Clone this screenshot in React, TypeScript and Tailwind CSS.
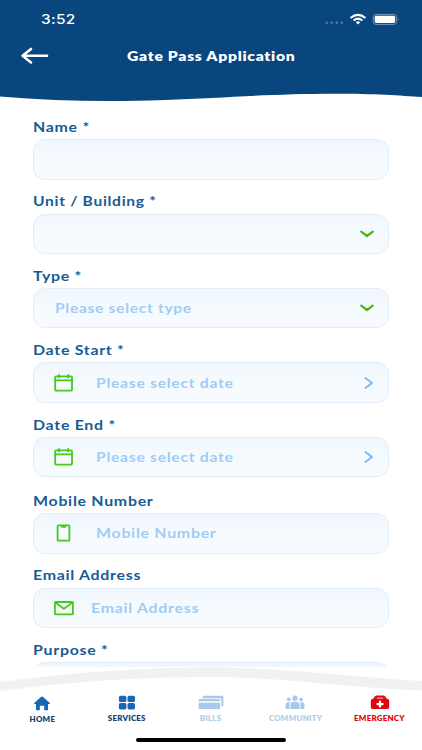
import React from "react";
import clsx from "clsx";

type FieldProps = {
  label: string;
  placeholder?: string;
  icon?: React.ReactNode;
  trailing?: "down" | "right";
  className?: string;
  labelClass?: string;
  textClass?: string;
};

// --- ICONS ---
const CalendarIcon = () => (
  <svg width="20" height="18" viewBox="0 0 20 18" fill="none" stroke="#46c81e" strokeWidth="1.8" strokeLinejoin="round" strokeLinecap="round">
    <rect x="1.2" y="2.4" width="16.8" height="14.2" rx="0.8" />
    <path d="M1.2 6.3H18M5 0.9V3.4M14.2 0.9V3.4" />
  </svg>
);

const PhoneIcon = () => (
  <svg width="20" height="18" viewBox="0 0 20 18" fill="none" stroke="#46c81e" strokeWidth="1.8" strokeLinejoin="round">
    <rect x="3.6" y="1.3" width="11.8" height="15.4" rx="0.6" />
    <path d="M6.6 1.4H12.4L11.4 3.4H7.6Z" fill="#46c81e" strokeWidth="0.6" />
  </svg>
);

const MailIcon = () => (
  <svg width="20" height="18" viewBox="0 0 20 18" fill="none" stroke="#46c81e" strokeWidth="1.8" strokeLinejoin="round">
    <rect x="0.9" y="3" width="18" height="12.4" rx="0.6" />
    <path d="M1.4 3.6L9.9 9.8L18.4 3.6" />
  </svg>
);

const HomeIcon = () => (
  <svg width="18" height="15" viewBox="0 0 18 15" fill="#1767b5">
    <path d="M8.2 0.8Q9 0.2 9.8 0.8L16.8 6.9Q17.3 8 16.2 8H15V13.4Q15 14.3 14.1 14.3H11.2V9.8H6.8V14.3H3.9Q3 14.3 3 13.4V8H1.8Q0.7 8 1.2 6.9Z" />
  </svg>
);

const ServicesIcon = () => (
  <svg width="18" height="15" viewBox="0 0 18 15" fill="#1767b5">
    <rect x="0.9" y="0.7" width="7.5" height="6.4" rx="1.7" />
    <rect x="9.5" y="0.7" width="7.5" height="6.4" rx="1.7" />
    <rect x="0.9" y="8" width="7.5" height="6.4" rx="1.7" />
    <rect x="9.5" y="8" width="7.5" height="6.4" rx="1.7" />
  </svg>
);

const BillsIcon = () => (
  <svg width="26" height="15" viewBox="0 0 26 15" fill="#a9c9ea">
    <path d="M5.8 0.7H24.2Q25.4 0.7 25.4 1.9V10.3Q25.4 11.2 24.4 11.2H23.3V4.2Q23.3 3.2 22.2 3.2H4.6V1.9Q4.6 0.7 5.8 0.7Z" />
    <path d="M1.7 4.1H21Q22.2 4.1 22.2 5.2V6.3H0.6V5.2Q0.6 4.1 1.7 4.1Z" />
    <path d="M0.6 7.7H22.2V12.9Q22.2 14.1 21 14.1H1.7Q0.6 14.1 0.6 12.9Z" />
  </svg>
);

const CommunityIcon = () => (
  <svg width="20" height="15" viewBox="0 0 20 15" fill="#a9c9ea">
    <circle cx="10" cy="3.2" r="2.6" />
    <circle cx="3.9" cy="4.4" r="1.9" />
    <circle cx="16.1" cy="4.4" r="1.9" />
    <path d="M5.5 13.9V9.7Q5.5 6.8 8.3 6.8H11.7Q14.5 6.8 14.5 9.7V13.9Z" />
    <path d="M0.6 13.9V9.7Q0.6 7.3 2.8 7.3H4.9Q4.5 8.4 4.5 9.7V13.9Z" />
    <path d="M19.4 13.9V9.7Q19.4 7.3 17.2 7.3H15.1Q15.5 8.4 15.5 9.7V13.9Z" />
  </svg>
);

const EmergencyIcon = () => (
  <svg width="20" height="15" viewBox="0 0 20 15">
    <path d="M3.2 3.8L4.8 1.6Q5.5 0.6 6.8 0.6H13.2Q14.5 0.6 15.2 1.6L16.8 3.8Q19.2 3.9 19.2 5.7V12.4Q19.2 14.1 17.2 14.1H2.8Q0.8 14.1 0.8 12.4V5.7Q0.8 3.9 3.2 3.8Z" fill="#df0812" />
    <path d="M7 3.1H13.1" stroke="#fff" strokeWidth="0.8" />
    <path d="M10 6.6V11.6M7.4 9.1H12.6" stroke="#fff" strokeWidth="2.3" strokeLinecap="round" />
  </svg>
);

const Trailing = ({ kind }: { kind: "down" | "right" }) =>
  kind === "down" ? (
    <svg width="16" height="10" viewBox="0 0 16 10" className="mr-px ml-auto" fill="none" stroke="#46b81e" strokeWidth="2.2" strokeLinecap="round" strokeLinejoin="round">
      <path d="M2.2 2.6L8 7L13.8 2.6" />
    </svg>
  ) : (
    <svg width="10" height="14" viewBox="0 0 10 14" className="mr-0.5 ml-auto" fill="none" stroke="#7bb8ef" strokeWidth="1.9" strokeLinecap="round" strokeLinejoin="round">
      <path d="M1.5 2L8 7L1.5 12" />
    </svg>
  );

// Wide-set text, used for titles, labels and placeholders
const Wide = ({ children, className = "scale-x-[1.18]" }: { children: string; className?: string }) => (
  <span className={clsx("inline-block origin-left whitespace-nowrap tracking-[0.6px]", className)}>{children}</span>
);

const Field = ({ label, placeholder, icon, trailing, className, labelClass, textClass }: FieldProps) => (
  <div className={clsx("h-[74.4px] shrink-0", className)}>
    <div className="flex h-[21.2px] items-start text-[13.5px] leading-[18px] font-bold text-[#175b94]">
      <Wide className={labelClass}>{label}</Wide>
    </div>
    <div className="flex h-[40.5px] items-center rounded-[12px] border border-[#e3edf7] bg-linear-to-b from-[#f0f6fd] via-[#f5fafe] via-40% to-[#f7fbff] pr-3 pl-5">
      {icon}
      {placeholder && (
        <span className={clsx("text-[13.5px] leading-5 font-bold text-[#9fcdf6]", icon ? "ml-[22px]" : "ml-px")}>
          <Wide className={textClass}>{placeholder}</Wide>
        </span>
      )}
      {trailing && <Trailing kind={trailing} />}
    </div>
  </div>
);

const tabs = [
  { name: "HOME", icon: <HomeIcon />, color: "text-[#173f78]", position: "pt-px" },
  { name: "SERVICES", icon: <ServicesIcon />, color: "text-[#173f78]", position: "" },
  { name: "BILLS", icon: <BillsIcon />, color: "text-[#b4cde8]", position: "" },
  { name: "COMMUNITY", icon: <CommunityIcon />, color: "text-[#b4cde8]", position: "" },
  { name: "EMERGENCY", icon: <EmergencyIcon />, color: "text-[#df0812]", position: "" },
];

export default function App() {
  return (
    <div className="flex h-[750px] w-[422px] flex-col overflow-hidden bg-white font-[Lato,sans-serif]">
      {/* Header */}
      <header className="h-[118px] shrink-0">
        <div className="h-[92px] bg-[#0a467e]">
          <div className="flex h-[38px] items-end justify-between pr-[22px] pl-[41px] text-white">
            <span className="inline-block origin-left scale-x-[1.14] font-[Inter,sans-serif] text-[13.5px] leading-[37px] font-medium tracking-[0.3px]">3:52</span>
            <div className="flex h-[38px] items-center">
              <svg width="75" height="14" viewBox="0 0 75 14" fill="none" className="mt-px">
                <g fill="#4c7ba6">
                  <circle cx="1.8" cy="9.8" r="1.3" />
                  <circle cx="6.8" cy="9.8" r="1.3" />
                  <circle cx="11.8" cy="9.8" r="1.3" />
                  <circle cx="16.8" cy="9.8" r="1.3" />
                </g>
                <g stroke="#fff" strokeWidth="2">
                  <path d="M25.5 5Q33 -1.2 40.5 5" />
                  <path d="M28.6 7.5Q33 3.7 37.4 7.5" />
                </g>
                <path d="M30.8 9.2Q33 7.5 35.2 9.2L33 11.5Z" fill="#fff" />
                <rect x="48.2" y="1.4" width="23.4" height="10" rx="2.8" stroke="#7f9fbf" strokeWidth="0.9" />
                <rect x="49.7" y="2.8" width="20.4" height="7.2" rx="1.4" fill="#fff" />
                <path d="M72.9 5Q74.4 6.4 72.9 7.8Z" fill="#7f9fbf" />
              </svg>
            </div>
          </div>
          <div className="flex h-9 items-center pl-[20px]">
            <svg width="29" height="18" viewBox="0 0 29 18" fill="none" stroke="#fff" strokeWidth="2.6" strokeLinecap="round" strokeLinejoin="round">
              <path d="M27 8.8H2.8M11 2L2.6 8.8L11 15.4" />
            </svg>
            <h1 className="ml-[78px] text-[13.5px] text-white">
              <Wide className="scale-x-[1.163] font-extrabold">Gate Pass Application</Wide>
            </h1>
          </div>
        </div>
        <svg width="422" height="12" viewBox="0 92 422 12" className="block">
          <path d="M0 91V96.4C55 101 105 102 165 100C225 97.8 270 93.7 335 93.7C375 93.7 400 95.5 422 97V91Z" fill="#0a467e" />
        </svg>
      </header>

      {/* Form */}
      <main className="flex h-[549px] shrink-0 flex-col overflow-hidden px-[33px]">
        <Field label="Name *" />
        <Field label="Unit / Building *" labelClass="scale-x-[1.155]" trailing="down" />
        <Field label="Type *" placeholder="Please select type" textClass="scale-x-[1.155]" trailing="down" />
        <Field label="Date Start *" placeholder="Please select date" textClass="scale-x-[1.165]" icon={<CalendarIcon />} trailing="right" />
        <Field label="Date End *" placeholder="Please select date" textClass="scale-x-[1.165]" icon={<CalendarIcon />} trailing="right" className="mb-[2px]" />
        <Field label="Mobile Number" placeholder="Mobile Number" icon={<PhoneIcon />} />
        <Field label="Email Address" placeholder="Email Address" textClass="-ml-[5px] scale-x-[1.18]" icon={<MailIcon />} />
        <Field label="Purpose *" />
      </main>

      {/* Bottom navigation */}
      <footer className="flex flex-1 flex-col">
        <svg width="422" height="25" viewBox="0 667 422 25" className="block shrink-0">
          <path d="M0 682C75 672 145 667.5 211 667.5C285 667.5 350 677 422 681V690.5C350 688 285 677 211 677C145 677 75 681 0 691Z" fill="#f0f1f2" />
        </svg>
        <nav className="grid h-[40px] grid-cols-5 pt-[3px]">
          {tabs.map((tab) => (
            <div key={tab.name} className={clsx("flex flex-col items-center", tab.position)}>
              {tab.icon}
              <span className={clsx("scale-x-[1.13] text-[7px] leading-[16px] font-extrabold tracking-[0.2px]", tab.color)}>{tab.name}</span>
            </div>
          ))}
        </nav>
        <div className="mx-auto mt-[6px] h-[4px] w-[150px] rounded-full bg-black" />
      </footer>
    </div>
  );
}
